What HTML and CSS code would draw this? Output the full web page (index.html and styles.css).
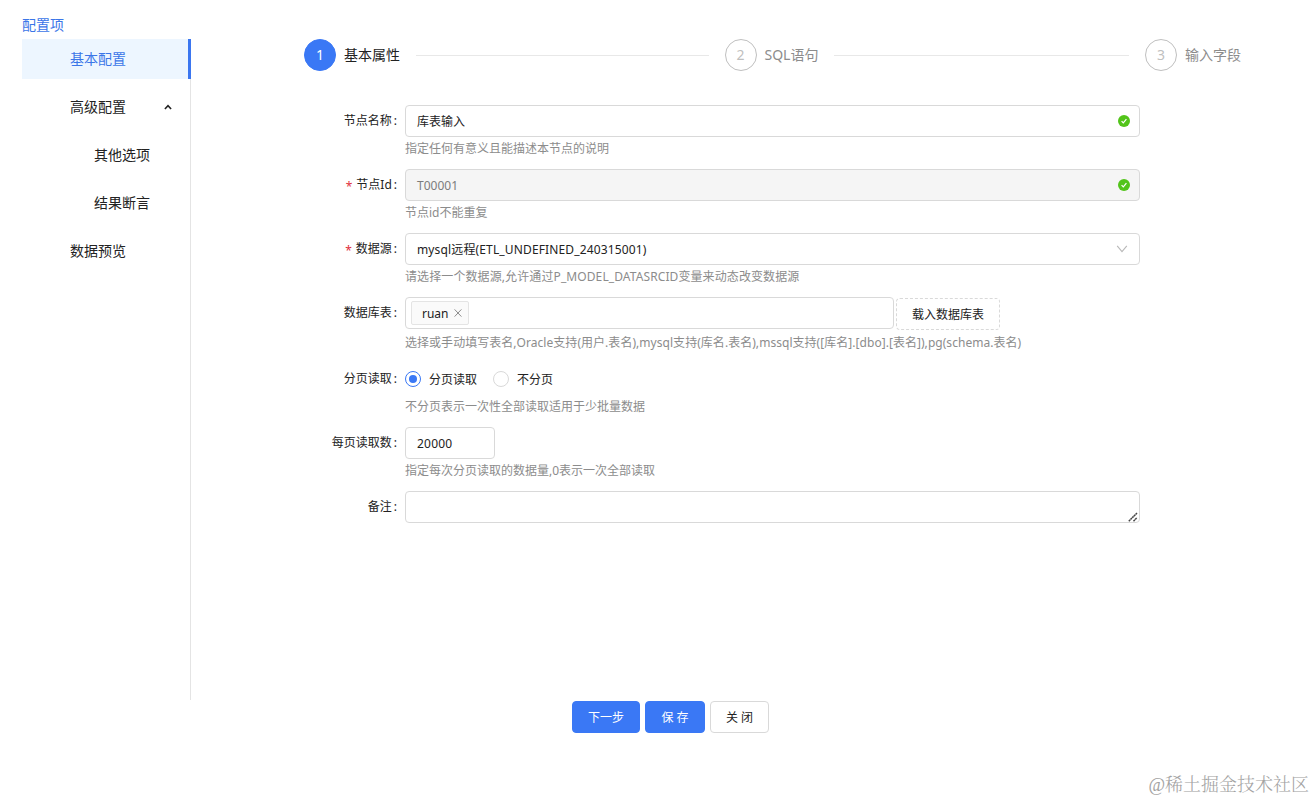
FILE: index.html
```html
<!DOCTYPE html>
<html lang="zh-CN">
<head>
    <meta charset="UTF-8" />
    <meta name="viewport" content="width=device-width, initial-scale=1.0" />
    <title>库表输入</title>
    <link rel="stylesheet" href="styles.css">
</head>
<body>
    <div class="layout">
        <aside class="sidebar">
            <div class="sidebar-title">配置项</div>
            <ul class="menu">
                <li class="menu-item active">基本配置</li>
                <li class="menu-item">高级配置
                    <svg class="menu-arrow" width="8" height="6" viewBox="0 0 8 6"><path d="M0.9 5 L4 1.7 L7.1 5" fill="none" stroke="#222" stroke-width="1.6" /></svg>
                </li>
                <li class="menu-item sub">其他选项</li>
                <li class="menu-item sub">结果断言</li>
                <li class="menu-item">数据预览</li>
            </ul>
        </aside>

        <main class="content">
            <div class="steps">
                <div class="step current">
                    <span class="step-icon">1</span>
                    <span class="step-title">基本属性</span>
                </div>
                <div class="step">
                    <span class="step-icon">2</span>
                    <span class="step-title">SQL语句</span>
                </div>
                <div class="step">
                    <span class="step-icon">3</span>
                    <span class="step-title">输入字段</span>
                </div>
            </div>

            <form class="form">
                <div class="form-row">
                    <label class="form-label">节点名称<i>:</i></label>
                    <div class="form-control">
                        <div class="input">
                            <span>库表输入</span>
                            <svg class="check" width="12" height="12" viewBox="0 0 12 12"><circle cx="6" cy="6" r="6" fill="#52c41a" /><path d="M3.6 6.1 L5.3 7.9 L8.4 4.2" fill="none" stroke="#fff" stroke-width="1.2" /></svg>
                        </div>
                        <div class="help">指定任何有意义且能描述本节点的说明</div>
                    </div>
                </div>
                <div class="form-row">
                    <label class="form-label"><b>*</b>节点Id<i>:</i></label>
                    <div class="form-control">
                        <div class="input disabled">
                            <span>T00001</span>
                            <svg class="check" width="12" height="12" viewBox="0 0 12 12"><circle cx="6" cy="6" r="6" fill="#52c41a" /><path d="M3.6 6.1 L5.3 7.9 L8.4 4.2" fill="none" stroke="#fff" stroke-width="1.2" /></svg>
                        </div>
                        <div class="help">节点id不能重复</div>
                    </div>
                </div>
                <div class="form-row">
                    <label class="form-label"><b>*</b>数据源<i>:</i></label>
                    <div class="form-control">
                        <div class="input">
                            <span class="datasource">mysql远程(ETL_UNDEFINED_240315001)</span>
                            <svg class="select-arrow" width="12" height="8" viewBox="0 0 12 8"><path d="M1.2 0.8 L6 6.6 L10.8 0.8" fill="none" stroke="#b8b8b8" stroke-width="1.1" /></svg>
                        </div>
                        <div class="help datasource-help">请选择一个数据源,允许通过P_MODEL_DATASRCID变量来动态改变数据源</div>
                    </div>
                </div>
                <div class="form-row table-row">
                    <label class="form-label">数据库表<i>:</i></label>
                    <div class="form-control">
                        <div class="table-select">
                            <div class="input tags">
                                <span class="tag">ruan
                                    <svg width="8" height="8" viewBox="0 0 8 8"><path d="M0.6 0.4 L7.4 7.6 M7.4 0.4 L0.6 7.6" stroke="#8c8c8c" stroke-width="1" /></svg>
                                </span>
                            </div>
                            <button type="button" class="btn dashed">载入数据库表</button>
                        </div>
                        <div class="help table-help">选择或手动填写表名,Oracle支持(用户.表名),mysql支持(库名.表名),mssql支持([库名].[dbo].[表名]),pg(schema.表名)</div>
                    </div>
                </div>
                <div class="form-row">
                    <label class="form-label">分页读取<i>:</i></label>
                    <div class="form-control">
                        <div class="radio-group">
                            <span class="radio checked"></span><span class="radio-text">分页读取</span>
                            <span class="radio"></span><span class="radio-text">不分页</span>
                        </div>
                        <div class="help">不分页表示一次性全部读取适用于少批量数据</div>
                    </div>
                </div>
                <div class="form-row">
                    <label class="form-label">每页读取数<i>:</i></label>
                    <div class="form-control">
                        <div class="input number">20000</div>
                        <div class="help">指定每次分页读取的数据量,0表示一次全部读取</div>
                    </div>
                </div>
                <div class="form-row">
                    <label class="form-label">备注<i>:</i></label>
                    <div class="form-control">
                        <div class="input remark">
                            <svg width="10" height="10" viewBox="0 0 10 10"><path d="M0.8 9.2 L9 1 M5.5 9.2 L9 5.7" stroke="#444" stroke-width="1.5" stroke-dasharray="2 0.4" /></svg>
                        </div>
                    </div>
                </div>
            </form>
        </main>
    </div>

    <div class="footer">
        <button type="button" class="btn primary next">下一步</button>
        <button type="button" class="btn primary save">保 存</button>
        <button type="button" class="btn close">关 闭</button>
    </div>
    <div class="watermark">@稀土掘金技术社区</div>
</body>
</html>
```

FILE: styles.css
```css
* {
    box-sizing: border-box;
}

body {
    margin: 0;
    height: 800px;
    overflow: hidden;
    background-color: #fff;
    color: #222;
    font-family: "Noto Sans", "Noto Sans CJK SC", sans-serif;
    font-size: 12px;
}

.layout {
    display: flex;
    height: 700px;
    padding: 11px 0 0 22px;
}

.sidebar {
    width: 169px;
}

.sidebar-title {
    height: 28px;
    line-height: 28px;
    font-size: 14px;
    color: #3b76e8;
}

.menu {
    height: 661px;
    margin: 0;
    padding: 0;
    list-style: none;
    border-right: 1px solid #e4e4e4;
}

.menu-item {
    display: flex;
    align-items: center;
    justify-content: space-between;
    height: 40px;
    margin-bottom: 8px;
    padding: 0 18px 2px 48px;
    font-size: 14px;
}

.menu-arrow {
    margin-top: 2px;
}

.menu-item.sub {
    padding-left: 72px;
}

.menu-item.active {
    margin-right: -1px;
    background-color: #edf6ff;
    border-right: 3px solid #3b76f0;
    color: #3b76e8;
}

.content {
    width: 949px;
    padding: 28px 0 0 113px;
}

.steps {
    display: flex;
    width: 937px;
    margin-bottom: 34px;
}

.step {
    display: flex;
    flex: 1;
    align-items: center;
    margin-right: 16px;
    font-size: 14px;
    color: #8c8c8c;
}

.step:last-child {
    flex: none;
    margin-right: 0;
}

.step:not(:last-child)::after {
    content: "";
    flex: 1;
    height: 1px;
    margin-left: 16px;
    background-color: #e8e8e8;
}

.step-icon {
    width: 32px;
    height: 32px;
    margin-right: 8px;
    border: 1px solid #bfbfbf;
    border-radius: 50%;
    color: #bfbfbf;
    line-height: 30px;
    text-align: center;
}

.step-title {
    padding-bottom: 2px;
    white-space: nowrap;
}

.step.current {
    color: #222;
}

.step.current .step-icon {
    background-color: #3a78f5;
    border-color: #3a78f5;
    color: #fff;
}

.form {
    width: 836px;
}

.form-row {
    display: flex;
    height: 64px;
}

.table-row {
    height: 66px;
}

.form-label {
    width: 101px;
    padding-right: 8px;
    line-height: 31px;
    text-align: right;
    white-space: nowrap;
}

.form-label i {
    margin-left: 2px;
    font-style: normal;
}

.form-label b {
    margin-right: 4px;
    color: #e0303c;
    font-weight: normal;
    line-height: 1;
    vertical-align: -2px;
}

.form-control {
    width: 735px;
}

.input {
    display: flex;
    align-items: center;
    justify-content: space-between;
    height: 32px;
    padding: 0 9px 0 11px;
    border: 1px solid #d9d9d9;
    border-radius: 4px;
    background-color: #fff;
    white-space: nowrap;
}

.input.disabled {
    background-color: #f5f5f5;
    color: #7c7c7c;
}

.datasource {
    letter-spacing: 0.14px;
}

.select-arrow {
    margin-right: 2px;
}

.help {
    height: 24px;
    line-height: 23px;
    color: #8c8c8c;
    white-space: nowrap;
}

.datasource-help {
    letter-spacing: 0.1px;
}

.table-help {
    letter-spacing: 0.04px;
}

.table-select {
    display: flex;
    gap: 2px;
    height: 34px;
}

.input.tags {
    width: 489px;
    padding: 0 5px;
}

.tag {
    display: flex;
    align-items: center;
    gap: 5px;
    width: 58px;
    height: 24px;
    padding: 0 6px 0 10px;
    border: 1px solid #e4e4e4;
    border-radius: 2px;
    background-color: #fafafa;
}

.btn {
    height: 32px;
    padding: 0;
    border: 1px solid #d9d9d9;
    border-radius: 4px;
    background-color: #fff;
    color: #222;
    font-family: inherit;
    font-size: 12px;
}

.btn.dashed {
    width: 104px;
    margin-top: 1px;
    border-style: dashed;
}

.btn.primary {
    background-color: #3a78f5;
    border-color: #3a78f5;
    color: #fff;
}

.radio-group {
    display: flex;
    align-items: center;
    height: 32px;
}

.radio {
    width: 16px;
    height: 16px;
    border: 1px solid #d9d9d9;
    border-radius: 50%;
}

.radio.checked {
    padding: 3px;
    border-color: #3a78f5;
    background: #3a78f5 content-box;
}

.radio-text {
    margin: 0 16px 0 8px;
}

.input.number {
    width: 90px;
    letter-spacing: 0.2px;
}

.input.remark {
    align-items: flex-end;
    justify-content: flex-end;
    padding: 0 1px 0 11px;
}

.footer {
    display: flex;
    gap: 5px;
    padding: 1px 0 0 572px;
}

.next {
    width: 68px;
}

.save {
    width: 60px;
}

.close {
    width: 59px;
}

.watermark {
    margin-top: 38px;
    padding-right: 6px;
    font-family: "Liberation Serif", "Noto Serif CJK SC", "Noto Sans CJK SC", serif;
    font-size: 18px;
    font-weight: 300;
    line-height: 28px;
    text-align: right;
    color: #a2a2a2;
}
```
